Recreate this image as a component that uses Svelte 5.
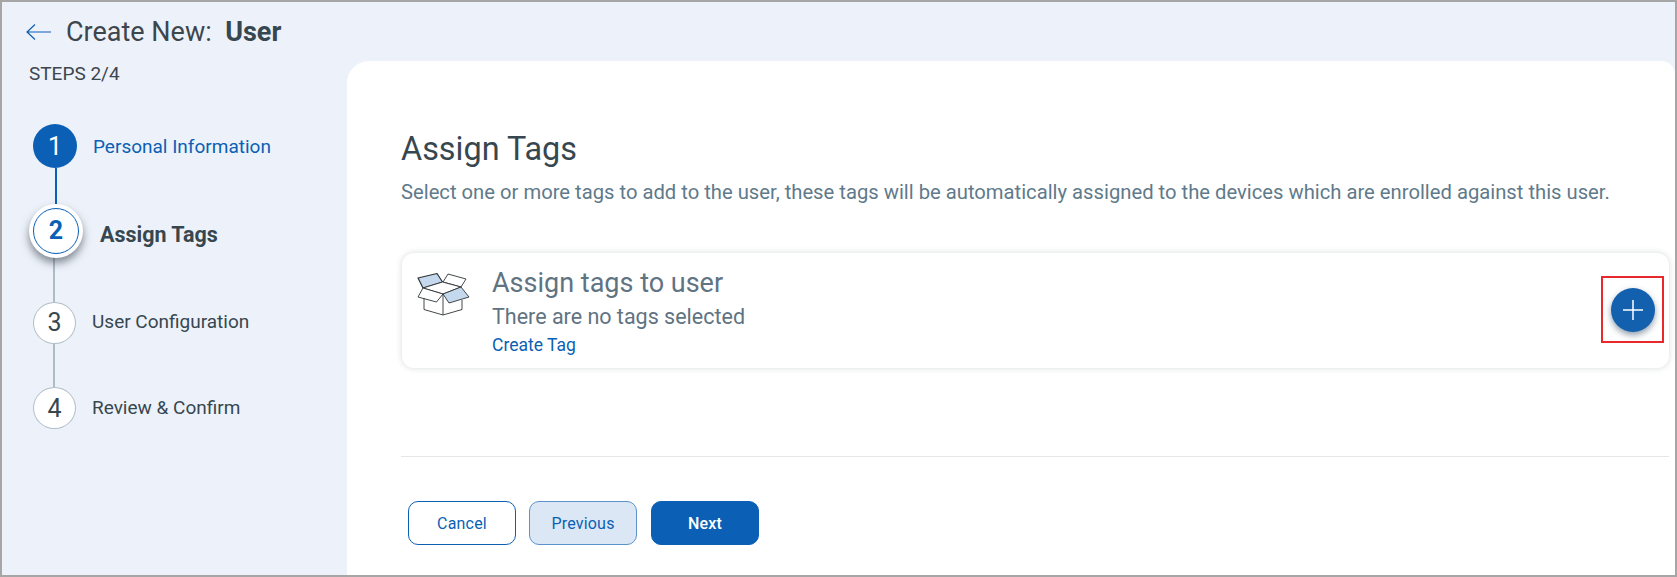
<script lang="ts">
	const steps = [
		{ n: 1, label: 'Personal Information', state: 'done' },
		{ n: 2, label: 'Assign Tags', state: 'current' },
		{ n: 3, label: 'User Configuration', state: 'todo' },
		{ n: 4, label: 'Review & Confirm', state: 'todo' }
	];
</script>

<div class="frame">
	<header class="top">
		<svg class="back" width="28" height="18" viewBox="0 0 28 18" aria-hidden="true">
			<path d="M26 9H2M10 1.500 2 9l8 7.500" fill="none" stroke="#0b5fb4" stroke-width="1.2" />
		</svg>
		<h1>Create New:&nbsp; <strong>User</strong></h1>
	</header>

	<div class="body">
		<aside class="side">
			<div class="count">STEPS 2/4</div>
			<ol class="steps">
				{#each steps as step, i}
					<li class="step {step.state}">
						<span class="dot"><span class="num">{step.n}</span></span>
						<span class="label">{step.label}</span>
					</li>
					{#if i < steps.length - 1}
						<li class="link {step.state}" aria-hidden="true"></li>
					{/if}
				{/each}
			</ol>
		</aside>

		<main class="panel">
			<h2>Assign Tags</h2>
			<p class="sub">Select one or more tags to add to the user, these tags will be automatically assigned to the devices which are enrolled against this user.</p>

			<section class="card">
				<svg class="box" width="54" height="46" viewBox="0 0 54 46" aria-hidden="true">
					<g fill="none" stroke="#2f3336" stroke-width="0.9" stroke-linejoin="round">
						<path d="M1 7 20 2.500 25.500 11 6 17Z" fill="#c5d9ee" stroke-width="1.2" />
						<path d="M31 3 49 8 44 16 26 11Z" fill="#fff" />
						<path d="M6 17 25.500 11 44 16 26 23Z" fill="#fff" />
						<path d="M6 17 1 26 19.500 31 26 23Z" fill="#fff" />
						<path d="M26 23 44 16 52 26 32 32Z" fill="#c5d9ee" />
						<path d="M7 27V38.500L26 44V23M26 44 45 38.500V29" />
					</g>
				</svg>
				<div class="info">
					<h3>Assign tags to user</h3>
					<p>There are no tags selected</p>
					<a href="#create">Create Tag</a>
				</div>
				<div class="highlight">
					<button class="add" type="button" aria-label="Add tags">
						<svg width="22" height="22" viewBox="0 0 22 22" aria-hidden="true">
							<path d="M11 1v20M1 11h20" stroke="#fff" stroke-width="1.500" />
						</svg>
					</button>
				</div>
			</section>

			<hr />

			<div class="actions">
				<button class="btn cancel" type="button">Cancel</button>
				<button class="btn prev" type="button">Previous</button>
				<button class="btn next" type="button">Next</button>
			</div>
		</main>
	</div>
</div>

<style>
	:global(body) {
		margin: 0;
	}

	.frame {
		box-sizing: border-box;
		width: 1677px;
		height: 577px;
		border: 2px solid #a6a6a6;
		background: #edf2fa;
		font-family: Roboto, sans-serif;
		color: #37474f;
		overflow: hidden;
		display: flex;
		flex-direction: column;
	}

	.top {
		height: 59px;
		flex: none;
		display: flex;
		align-items: center;
		padding: 0 0 0 23px;
		gap: 13px;
		box-sizing: border-box;
	}

	h1 {
		margin: 0;
		font-size: 27px;
		font-weight: 400;
		color: #3d464d;
	}

	h1 strong {
		font-weight: 700;
		color: #37474f;
	}

	.body {
		flex: 1;
		display: flex;
		min-height: 0;
	}

	.side {
		width: 345px;
		flex: none;
	}

	.count {
		margin-left: 27px;
		font-size: 19px;
		line-height: 22px;
		margin-top: 2px;
		color: #3d464d;
	}

	.steps {
		list-style: none;
		margin: 39px 0 0;
		padding: 0;
	}

	.step {
		display: flex;
		align-items: center;
		height: 42px;
		padding-left: 31px;
		font-size: 19px;
	}

	.dot {
		box-sizing: border-box;
		width: 43px;
		height: 42px;
		border-radius: 50%;
		border: 1px solid #b0bec5;
		background: #fff;
		display: flex;
		align-items: center;
		justify-content: center;
		font-size: 25px;
		flex: none;
	}

	.label {
		margin-left: 16px;
		position: relative;
		top: -1px;
	}

	.step.done {
		height: 44px;
	}

	.done .dot {
		width: 44px;
		height: 44px;
		background: #0b5fb4;
		border: 0;
		color: #fff;
	}

	.done .label {
		color: #0b5fb4;
		top: 0;
	}

	.step.current {
		height: 54px;
		padding-left: 27px;
		position: relative;
	}

	.current .dot {
		width: 54px;
		height: 54px;
		border: 0;
		box-shadow: 0 5px 9px rgba(40, 50, 60, 0.55);
		color: #0b5fb4;
		font-weight: 700;
		position: relative;
	}

	.current .num {
		position: relative;
		top: -1px;
	}

	.current .dot::before {
		content: '';
		position: absolute;
		inset: 4px;
		border-radius: 50%;
		border: 1px solid #0b5fb4;
	}

	.current .label {
		margin-left: 17px;
		font-size: 21.500px;
		font-weight: 700;
		top: 3px;
	}

	.link {
		width: 2px;
		height: 43.500px;
		margin-left: 51px;
		background: #aebcc6;
	}

	.link.done {
		height: 36px;
		margin-left: 53px;
		background: #0b5fb4;
	}

	.panel {
		flex: 1;
		background: #fff;
		border-top-left-radius: 22px;
		border-top-right-radius: 14px;
		padding: 69px 6px 0 54px;
		min-width: 0;
	}

	h2 {
		margin: 0;
		font-size: 32.400px;
		font-weight: 400;
		line-height: 38px;
		color: #37474f;
	}

	.sub {
		margin: 12px 0 0;
		font-size: 20.230px;
		line-height: 24px;
		color: #5f7a8a;
		white-space: nowrap;
	}

	.card {
		margin-top: 49px;
		margin-left: 1px;
		height: 115px;
		box-sizing: border-box;
		border-radius: 12px;
		box-shadow: 0 0 6px rgba(60, 70, 80, 0.2);
		display: flex;
		align-items: flex-start;
		padding: 18px 5px 0 15px;
		background: #fff;
	}

	.info {
		margin-left: 21px;
		flex: 1;
		margin-top: -4px;
	}

	h3 {
		margin: 0;
		font-size: 27px;
		line-height: 32px;
		font-weight: 400;
		color: #5f7382;
	}

	.info p {
		margin: 5px 0 0;
		font-size: 21.500px;
		line-height: 26px;
		color: #5f7382;
	}

	.info a {
		display: block;
		margin-top: 4px;
		font-size: 17.500px;
		line-height: 22px;
		color: #0b5fb4;
		text-decoration: none;
	}

	.highlight {
		box-sizing: border-box;
		width: 63px;
		height: 67px;
		margin-top: 5px;
		border: 2px solid #e8282b;
		display: flex;
		align-items: center;
		justify-content: center;
	}

	.add {
		width: 44px;
		height: 44px;
		padding: 0;
		border: 0;
		border-radius: 50%;
		background: #1260ae;
		box-shadow: 0 3px 6px rgba(30, 60, 90, 0.5);
		display: flex;
		align-items: center;
		justify-content: center;
	}

	hr {
		border: 0;
		border-top: 1px solid #e3e7ea;
		margin: 88px 0 0;
	}

	.actions {
		display: flex;
		gap: 13px;
		margin: 44px 0 0 7px;
	}

	.btn {
		box-sizing: border-box;
		width: 108px;
		height: 44px;
		border-radius: 10px;
		border: 1px solid #0b5fb4;
		font-family: inherit;
		font-size: 16px;
		letter-spacing: 0.2px;
		color: #0b5fb4;
		background: #fff;
		padding: 0;
	}

	.prev {
		background: #dbe7f4;
		border-color: #5b93cc;
	}

	.next {
		margin-left: 1px;
		background: #0b5fb4;
		color: #fff;
		font-weight: 500;
	}
</style>
